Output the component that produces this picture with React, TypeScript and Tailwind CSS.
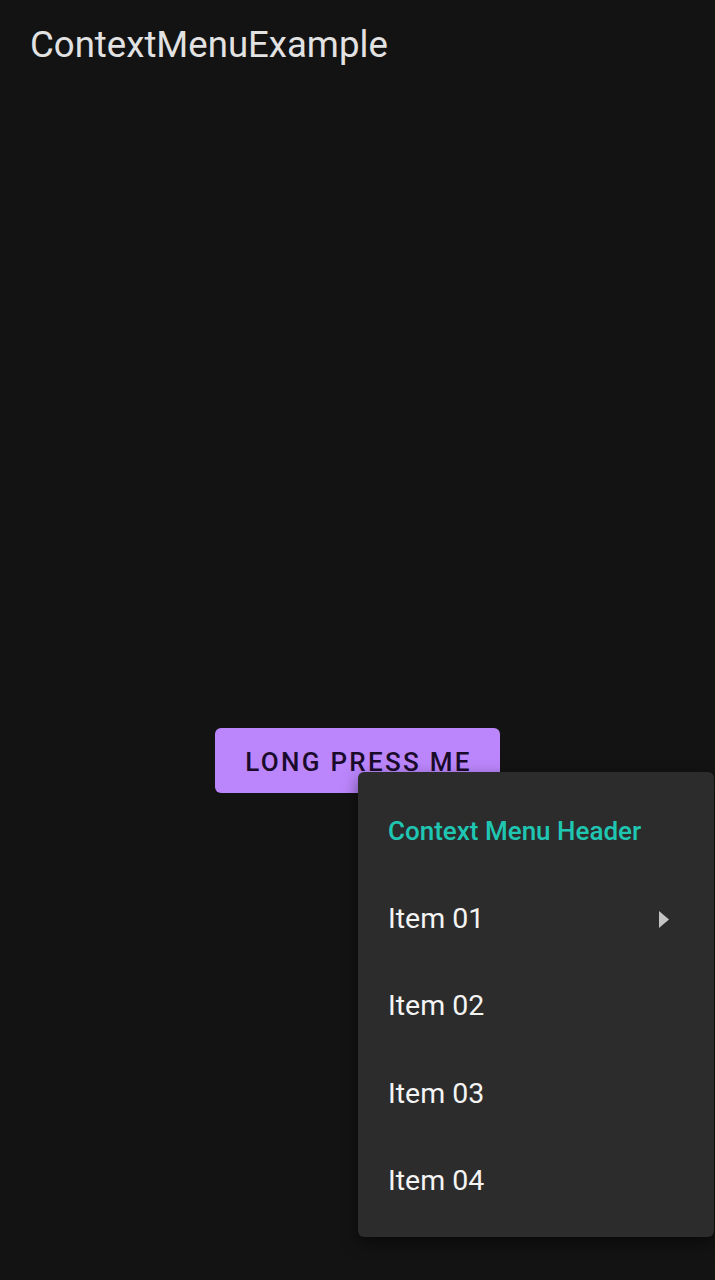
import React from "react";

export default function App() {
  const items = ["Item 01", "Item 02", "Item 03", "Item 04"];
  return (
    <div
      className="relative w-[715px] h-[1280px] bg-[#131313] overflow-hidden"
      style={{ fontFamily: "Roboto, 'Noto Sans', sans-serif" }}
    >
      <div className="px-[30px] pt-[22px] text-[36.6px] leading-[46px] text-[#e2e2e2]">
        ContextMenuExample
      </div>
      <div className="flex justify-center pt-[660px]">
        <button className="w-[285px] h-[65px] rounded-[6px] bg-[#bb86fc] text-[#1a0b2b] text-[26px] font-medium tracking-[2.3px] flex items-center justify-center pt-[3px] pl-[2px]">
          LONG PRESS ME
        </button>
      </div>
      <div className="absolute left-[358px] top-[772px] w-[356px] rounded-[6px] bg-[#2c2c2c] pt-[16px] pb-[11.5px] shadow-[0_6px_16px_rgba(0,0,0,0.5)]">
        <div className="h-[87.5px] flex items-center px-[30px] text-[26px] font-medium text-[#1fc7b3]">
          Context Menu Header
        </div>
        {items.map((it, i) => (
          <div
            key={it}
            className="h-[87.5px] flex items-center justify-between pl-[30px] pr-[45px] text-[28.5px] text-[#f4f4f4]"
          >
            <span>{it}</span>
            {i === 0 && (
              <svg width="10" height="17" viewBox="0 0 10 17">
                <polygon points="0,0 10,8.5 0,17" fill="#c4c4c4" />
              </svg>
            )}
          </div>
        ))}
      </div>
    </div>
  );
}
